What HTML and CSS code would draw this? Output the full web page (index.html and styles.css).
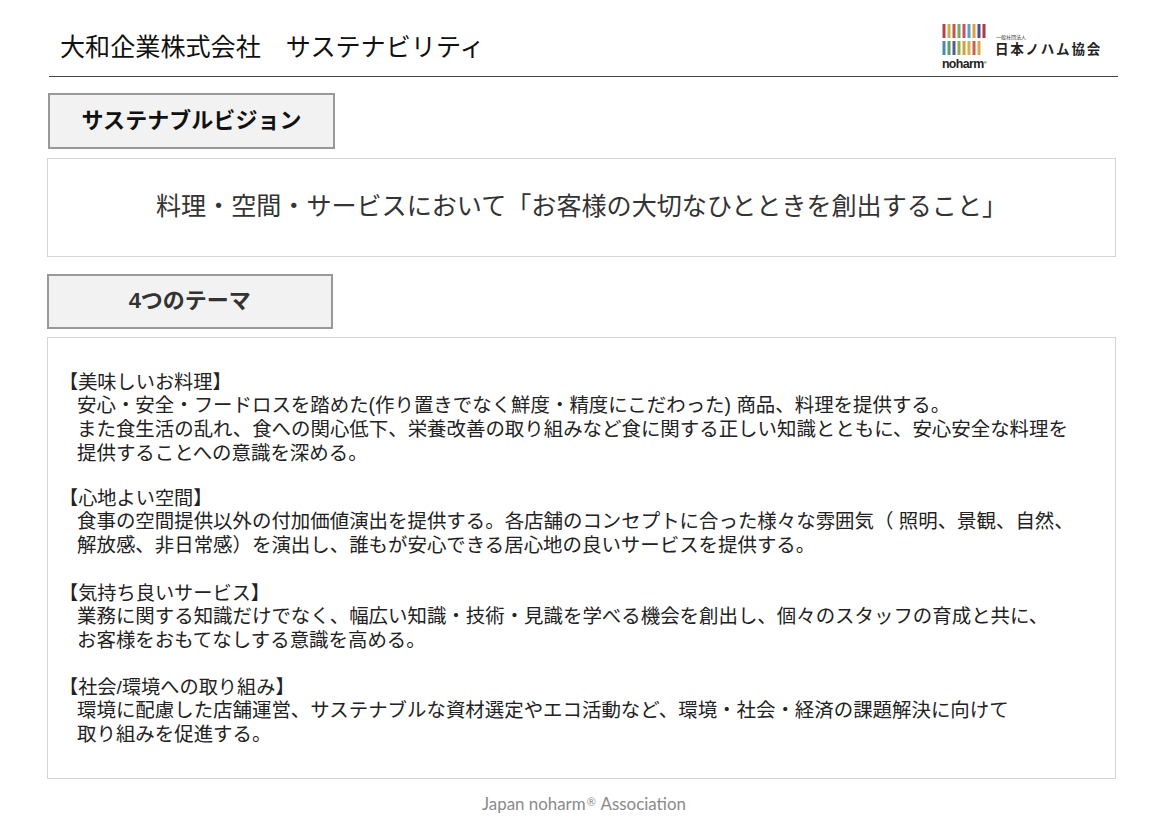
FILE: index.html
```html
<!DOCTYPE html>
<html lang="ja">
<head>
<meta charset="utf-8">
<title>大和企業株式会社 サステナビリティ</title>
<link rel="stylesheet" href="styles.css">
</head>
<body>
<div class="page">
  <header class="header">
    <h1 class="title">大和企業株式会社　サステナビリティ</h1>
    <div class="logo">
      <div class="mark">
        <svg class="bars" width="46" height="31" viewBox="0 0 46 31">
          <g>
            <rect x="0.5" y="0" width="3" height="14" fill="#b8404a"/><rect x="5.5" y="0" width="3" height="14" fill="#c0b24e"/><rect x="10.5" y="0" width="3" height="14" fill="#c7544e"/><rect x="15.5" y="0" width="3" height="14" fill="#7fa85a"/><rect x="20.5" y="0" width="3" height="14" fill="#c8506e"/><rect x="25.5" y="0" width="3" height="14" fill="#5c9fc0"/><rect x="30.5" y="0" width="3" height="14" fill="#e0a040"/><rect x="35.5" y="0" width="3" height="14" fill="#5a4a80"/><rect x="40.5" y="0" width="3" height="14" fill="#a83a4a"/>
            <rect x="0.5" y="17" width="3" height="14" fill="#4a8ab0"/><rect x="5.5" y="17" width="3" height="14" fill="#58a068"/><rect x="10.5" y="17" width="3" height="14" fill="#5a5a90"/><rect x="15.5" y="17" width="3" height="14" fill="#8ab050"/><rect x="20.5" y="17" width="3" height="14" fill="#d0a040"/><rect x="25.5" y="17" width="3" height="14" fill="#d8b050"/><rect x="30.5" y="17" width="3" height="14" fill="#c86050"/><rect x="35.5" y="17" width="3" height="14" fill="#e0a848"/>
          </g>
        </svg>
        <span class="noharm">noharm<sup class="reg">®</sup></span>
      </div>
      <div class="assoc">
        <span class="assoc-small">一般社団法人</span>
        <span class="assoc-name">日本ノハム協会</span>
      </div>
    </div>
  </header>
  <div class="heading heading-first">サステナブルビジョン</div>
  <section class="panel vision">料理・空間・サービスにおいて「お客様の大切なひとときを創出すること」</section>
  <div class="heading heading-second">4つのテーマ</div>
  <section class="panel themes">
    <div class="theme">
      <p class="theme-title">【美味しいお料理】</p>
      <p class="line">安心・安全・フードロスを踏めた(作り置きでなく鮮度・精度にこだわった) 商品、料理を提供する。</p>
      <p class="line">また食生活の乱れ、食への関心低下、栄養改善の取り組みなど食に関する正しい知識とともに、安心安全な料理を</p>
      <p class="line">提供することへの意識を深める。</p>
    </div>
    <div class="theme">
      <p class="theme-title">【心地よい空間】</p>
      <p class="line">食事の空間提供以外の付加価値演出を提供する。各店舗のコンセプトに合った様々な雰囲気（ 照明、景観、自然、</p>
      <p class="line">解放感、非日常感）を演出し、誰もが安心できる居心地の良いサービスを提供する。</p>
    </div>
    <div class="theme">
      <p class="theme-title">【気持ち良いサービス】</p>
      <p class="line">業務に関する知識だけでなく、幅広い知識・技術・見識を学べる機会を創出し、個々のスタッフの育成と共に、</p>
      <p class="line">お客様をおもてなしする意識を高める。</p>
    </div>
    <div class="theme">
      <p class="theme-title">【社会/環境への取り組み】</p>
      <p class="line">環境に配慮した店舗運営、サステナブルな資材選定やエコ活動など、環境・社会・経済の課題解決に向けて</p>
      <p class="line">取り組みを促進する。</p>
    </div>
  </section>
  <footer class="footer">Japan noharm<span class="footer-reg">®</span> Association</footer>
</div>
</body>
</html>
```
FILE: styles.css
```css
* { box-sizing: border-box; }
html, body { margin: 0; padding: 0; background: #fff; }
body { font-family: "Liberation Sans", "Noto Sans CJK JP", sans-serif; color: #222; }
.page { width: 1169px; height: 826px; padding: 0 53px 0 47px; overflow: hidden; display: flex; flex-direction: column; }
.header { height: 77px; margin: 0 -2px 0 2px; border-bottom: 1px solid #444; display: flex; justify-content: space-between; align-items: flex-start; padding: 0 16px 0 11px; }
.title { margin: 31px 0 0; font-size: 25.1px; line-height: 32px; font-weight: 400; color: #111; white-space: nowrap; }
.logo { display: flex; gap: 7px; padding-top: 24px; }
.mark { display: flex; flex-direction: column; width: 46px; }
.bars { display: block; }
.noharm { font-size: 12.4px; line-height: 14px; font-weight: 700; color: #222; margin-top: 2px; white-space: nowrap; letter-spacing: -0.6px; }
.reg { font-size: 4px; line-height: 0; vertical-align: 4px; }
.assoc { display: flex; flex-direction: column; padding-top: 10px; }
.assoc-small { font-size: 5px; line-height: 6px; color: #333; padding-left: 1px; }
.assoc-name { font-size: 13.5px; line-height: 18px; margin-top: 1px; letter-spacing: 1.8px; color: #222; font-weight: 700; white-space: nowrap; }
.heading { border: 2px solid #999; background: #f2f2f2; display: flex; align-items: center; justify-content: center; font-size: 22px; font-weight: 700; color: #111; }
.heading-first { width: 287px; height: 56px; margin: 16px 0 0 1px; padding-bottom: 6px; letter-spacing: 0.05px; }
.heading-second { width: 285.5px; height: 55px; margin-top: 17px; padding-bottom: 8px; color: #333; }
.panel { width: 1069px; border: 1px solid #d4d4d4; background: #fff; }
.vision { height: 99px; margin-top: 9px; display: flex; align-items: center; justify-content: center; padding-bottom: 8px; font-size: 25.08px; color: #333; white-space: nowrap; }
.themes { height: 442px; margin-top: 8px; padding: 31px 0 0 11px; font-size: 19.45px; line-height: 24px; color: #222; display: flex; flex-direction: column; }
.theme { display: flex; flex-direction: column; }
.theme:nth-child(1) { margin-bottom: 20px; }
.theme:nth-child(2) { margin-bottom: 23px; }
.theme:nth-child(3) { margin-bottom: 22px; }
.theme p { margin: 0; white-space: nowrap; }
.theme .theme-title { font-size: 19.2px; padding-top: 2px; margin-bottom: -2px; }
.line { padding-left: 18px; }
.footer { margin-top: 15px; width: 1074px; text-align: center; font-family: Lato, sans-serif; font-size: 16.9px; line-height: 20px; color: #8a8a8a; }
.footer-reg { font-size: 11px; vertical-align: 4px; line-height: 0; margin: 0 1px; }
```
